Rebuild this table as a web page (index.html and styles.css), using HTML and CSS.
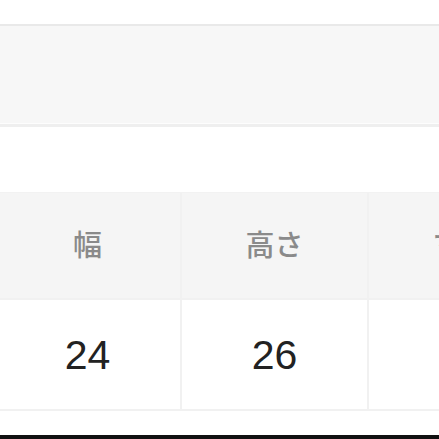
FILE: index.html
```html
<!DOCTYPE html>
<html lang="ja">
<head>
<meta charset="utf-8">
<link rel="stylesheet" href="styles.css">
</head>
<body>
<div class="page">
  <div class="band"></div>
  <div class="size-table">
    <div class="cell head">幅</div>
    <div class="cell head">高さ</div>
    <div class="cell head">マチ</div>
    <div class="cell val">24</div>
    <div class="cell val">26</div>
    <div class="cell val">10</div>
  </div>
  <div class="bottom-bar"></div>
</div>
</body>
</html>
```
FILE: styles.css
```css
html, body {
  margin: 0;
  padding: 0;
  background: #fff;
  overflow: hidden;
}
.page {
  width: 439px;
  height: 439px;
  display: flex;
  flex-direction: column;
  overflow: hidden;
  font-family: "Liberation Sans", "Noto Sans CJK JP", sans-serif;
}
.band {
  margin-top: 24px;
  height: 97px;
  background: #f7f7f7;
  border-top: 2px solid #e9e9e9;
  border-bottom: 1px solid #fdfdfd;
  box-shadow: 0 3px 0 #efefef;
  flex: none;
}
.size-table {
  margin-top: 68px;
  margin-left: -5px;
  display: grid;
  grid-template-columns: 187px 187px 187px;
  grid-template-rows: 107px 111px;
  border-top: 1px solid #f2f2f2;
  flex: none;
}
.cell {
  display: flex;
  align-items: center;
  justify-content: center;
  border-right: 2px solid #f1f1f1;
  border-bottom: 2px solid #f1f1f1;
  box-sizing: border-box;
}
.head {
  background: #f5f5f5;
  color: #8a8a8a;
  font-family: "Noto Sans CJK JP", sans-serif;
  font-weight: 500;
  font-size: 29px;
  padding-bottom: 6px;
}
.val {
  background: #fff;
  color: #222;
  font-size: 41px;
  padding-top: 2px;
}
.bottom-bar {
  margin-top: auto;
  height: 4px;
  background: #111;
  flex: none;
}
```
